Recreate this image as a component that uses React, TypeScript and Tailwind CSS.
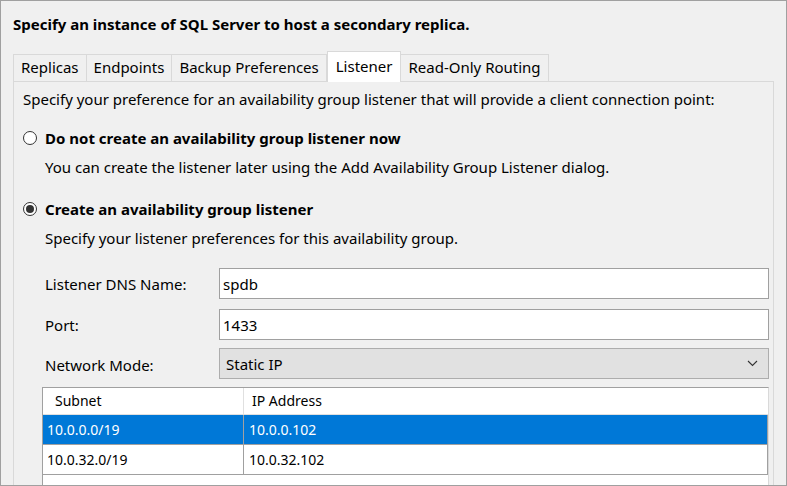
import React from "react";

const tabs = ["Replicas", "Endpoints", "Backup Preferences", "Listener", "Read-Only Routing"];

function Radio({ checked }: { checked?: boolean }) {
  return (
    <span className="flex h-[14px] w-[14px] shrink-0 items-center justify-center rounded-full border border-[#333] bg-white">
      {checked && <span className="h-[8px] w-[8px] rounded-full bg-[#333]" />}
    </span>
  );
}

function Field({ label, value, select }: { label: string; value: string; select?: boolean }) {
  return (
    <div className="flex items-center">
      <div className={select ? "w-[205px] pl-[31px] pt-[3px]" : "w-[205px] pl-[31px]"}>{label}</div>
      <div
        className={
          select
            ? "flex h-[31px] flex-1 items-center justify-between border border-[#adadad] bg-[#e1e1e1] pl-[6px] pr-[10px]"
            : "flex h-[31px] flex-1 items-center border border-[#a0a0a0] bg-white pl-[3px]"
        }
      >
        <span>{value}</span>
        {select && (
          <svg width="11" height="7" viewBox="0 0 11 7" fill="none" stroke="#333" strokeWidth="1.1">
            <path d="M1 1l4.5 4.5L10 1" />
          </svg>
        )}
      </div>
    </div>
  );
}

export default function App() {
  return (
    <div
      className="h-[486px] w-[787px] overflow-hidden border border-[#a0a0a0] bg-[#f0f0f0] text-[15px] leading-[20px] text-black"
      style={{ fontFamily: '"Noto Sans", "Open Sans", sans-serif' }}
    >
      <div className="px-[12px] pt-[13px] font-bold">
        Specify an instance of SQL Server to host a secondary replica.
      </div>

      <div className="mt-[17px] flex items-end px-[12px]">
        {tabs.map((t) =>
          t === "Listener" ? (
            <div
              key={t}
              className="relative z-10 -mb-px flex h-[31px] items-center border border-b-0 border-[#d9d9d9] bg-white px-[8px] pb-[3px]"
            >
              {t}
            </div>
          ) : (
            <div
              key={t}
              className="-ml-px flex h-[27px] items-center border border-b-0 border-[#d9d9d9] bg-[#f0f0f0] px-[7px] pb-[2px] first:ml-0"
            >
              {t}
            </div>
          )
        )}
      </div>

      <div className="mx-[12px] h-[420px] border border-[#d9d9d9] bg-[#f0f0f0] pt-[7px]">
        <div className="pl-[9px]">
          Specify your preference for an availability group listener that will provide a client connection point:
        </div>

        <div className="mt-[19px] flex items-center gap-[8px] pl-[9px] font-bold">
          <Radio />
          <span>Do not create an availability group listener now</span>
        </div>
        <div className="mt-[9px] pl-[31px]">
          You can create the listener later using the Add Availability Group Listener dialog.
        </div>

        <div className="mt-[22px] flex items-center gap-[8px] pl-[9px] font-bold">
          <Radio checked />
          <span>Create an availability group listener</span>
        </div>
        <div className="mt-[9px] pl-[31px]">Specify your listener preferences for this availability group.</div>

        <div className="mr-[4px] mt-[20px] flex flex-col gap-[10px]">
          <Field label="Listener DNS Name:" value="spdb" />
          <Field label="Port:" value="1433" />
        </div>
        <div className="mr-[4px] mt-[8px]">
          <Field label="Network Mode:" value="Static IP" select />
        </div>

        <div className="ml-[28px] mr-[4px] mt-[8px] h-[120px] border border-[#a0a0a0] border-r-[#d9d9d9] bg-white text-[14px]">
          <div className="flex h-[27px] border-b border-[#e0e0e0]">
            <div className="flex w-[201px] items-center border-r border-[#e0e0e0] pl-[12px]">Subnet</div>
            <div className="flex flex-1 items-center pl-[8px]">IP Address</div>
          </div>
          <div className="flex h-[30px] border-b border-r border-[#a0a0a0] bg-[#0078d7] text-white">
            <div className="flex w-[201px] items-center border-r border-[#a0a0a0] pl-[4px]">10.0.0.0/19</div>
            <div className="flex flex-1 items-center pl-[5px]">10.0.0.102</div>
          </div>
          <div className="flex h-[30px] border-b border-r border-[#a0a0a0]">
            <div className="flex w-[201px] items-center border-r border-[#a0a0a0] pl-[4px]">10.0.32.0/19</div>
            <div className="flex flex-1 items-center pl-[5px]">10.0.32.102</div>
          </div>
        </div>
      </div>
    </div>
  );
}
